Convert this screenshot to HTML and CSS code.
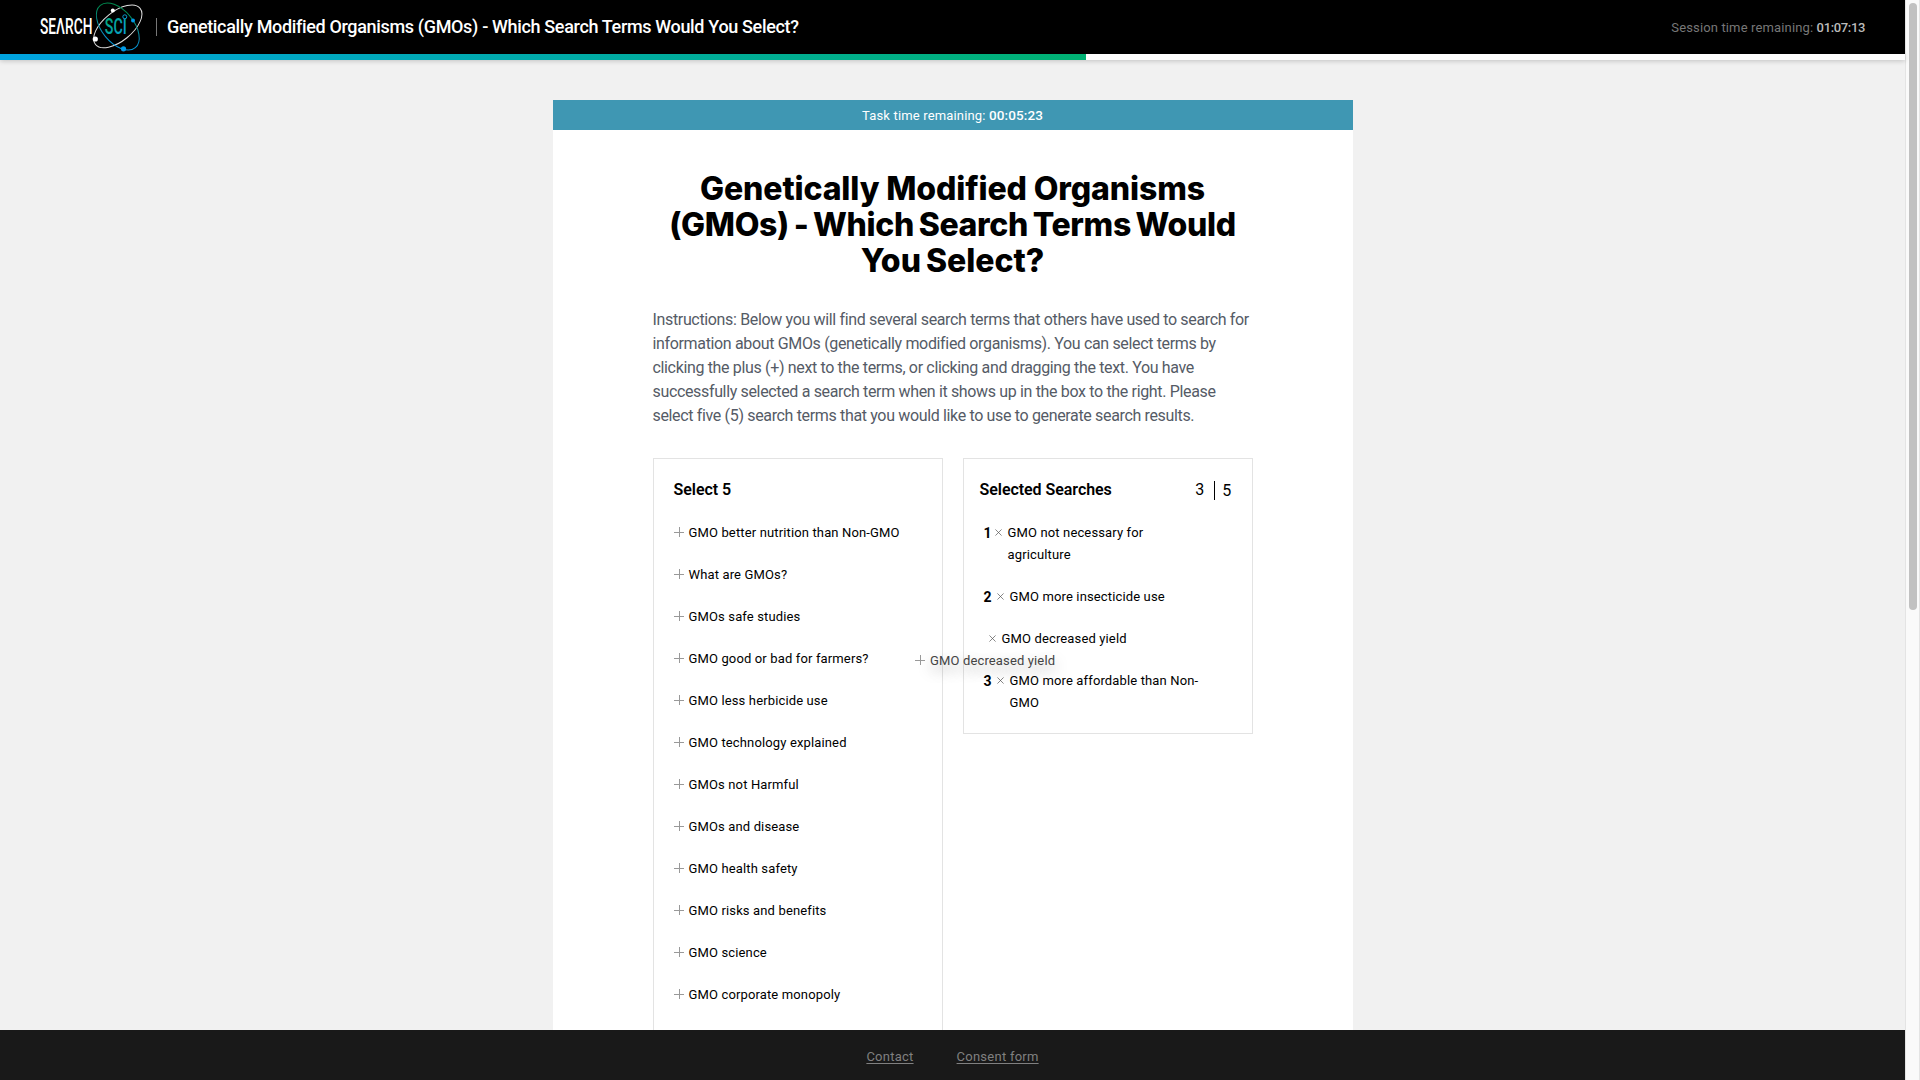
FILE: index.html
```html
<!DOCTYPE html>
<html lang="en">
<head>
<meta charset="utf-8">
<title>Search Sci</title>
<link rel="stylesheet" href="styles.css">
</head>
<body>
<div class="page">
  <header class="header">
    <svg class="logo" width="110" height="54" viewBox="36 0 110 54" role="img" aria-label="Search Sci">
      <defs>
        <linearGradient id="orbit" gradientUnits="userSpaceOnUse" x1="103" y1="8" x2="133" y2="46">
          <stop offset="0.15" stop-color="#00884e"/>
          <stop offset="0.7" stop-color="#0a8fc4"/>
          <stop offset="1" stop-color="#009be8"/>
        </linearGradient>
        <linearGradient id="sci" gradientUnits="userSpaceOnUse" x1="105" y1="18" x2="127" y2="32">
          <stop offset="0" stop-color="#00a878"/>
          <stop offset="1" stop-color="#0a9fd8"/>
        </linearGradient>
      </defs>
      <ellipse cx="117.8" cy="26.4" rx="28.7" ry="14.6" transform="rotate(-39 117.8 26.4)" class="orbit-white"/>
      <ellipse cx="117.8" cy="26.5" rx="27.5" ry="16" transform="rotate(50.5 117.8 26.5)" class="orbit-color"/>
      <circle cx="112.8" cy="10.5" r="2" fill="#fff"/>
      <circle cx="95.3" cy="39" r="2.6" fill="#fff"/>
      <circle cx="133" cy="20.5" r="2" fill="#009be8"/>
      <circle cx="123.5" cy="48.8" r="2.6" fill="#009be8"/>
      <text x="40" y="34" textLength="52.5" lengthAdjust="spacingAndGlyphs" class="logo-text" fill="#fff">SEΛRCH</text>
      <text x="104.8" y="34" textLength="22" lengthAdjust="spacingAndGlyphs" class="logo-text" fill="url(#sci)">SCI</text>
      <circle cx="124.8" cy="16.8" r="2" fill="#000" stroke="#0a9fd0"/>
    </svg>
    <div class="header-title">Genetically Modified Organisms (GMOs) - Which Search Terms Would You Select?</div>
    <div class="session">Session time remaining: <b>01:07:13</b></div>
  </header>
  <div class="progress"><div class="progress-fill" style="width: 57%"></div></div>

  <main class="content">
    <div class="card">
      <div class="task-time">Task time remaining: <b>00:05:23</b></div>
      <div class="card-body">
        <h1><span class="line-a">Genetically Modified Organisms</span><br><span class="line-b">(GMOs) - Which Search Terms Would</span><br><span class="line-c">You Select?</span></h1>
        <p class="intro">Instructions: Below you will find several search terms that others have used to search for<br>information about GMOs (genetically modified organisms). You can select terms by<br>clicking the plus (+) next to the terms, or clicking and dragging the text. You have<br>successfully selected a search term when it shows up in the box to the right. Please<br>select five (5) search terms that you would like to use to generate search results.</p>
        <div class="columns">
          <section class="box pool">
            <h2>Select 5</h2>
            <ul>
              <li><i class="plus"></i>GMO better nutrition than Non-GMO</li>
              <li><i class="plus"></i>What are GMOs?</li>
              <li><i class="plus"></i>GMOs safe studies</li>
              <li><i class="plus"></i>GMO good or bad for farmers?</li>
              <li><i class="plus"></i>GMO less herbicide use</li>
              <li><i class="plus"></i>GMO technology explained</li>
              <li><i class="plus"></i>GMOs not Harmful</li>
              <li><i class="plus"></i>GMOs and disease</li>
              <li><i class="plus"></i>GMO health safety</li>
              <li><i class="plus"></i>GMO risks and benefits</li>
              <li><i class="plus"></i>GMO science</li>
              <li><i class="plus"></i>GMO corporate monopoly</li>
            </ul>
          </section>
          <section class="box selected">
            <div class="box-head">
              <h2>Selected Searches</h2>
              <div class="count"><span>3</span><span class="total">5</span></div>
            </div>
            <ul>
              <li class="first"><b>1</b><svg class="cross" viewBox="0 0 8 8"><path d="M.5.5l7 7M7.5.5l-7 7"/></svg><span>GMO not necessary for<br>agriculture</span></li>
              <li><b>2</b><svg class="cross" viewBox="0 0 8 8"><path d="M.5.5l7 7M7.5.5l-7 7"/></svg><span>GMO more insecticide use</span></li>
              <li class="incoming"><svg class="cross" viewBox="0 0 8 8"><path d="M.5.5l7 7M7.5.5l-7 7"/></svg><span>GMO decreased yield</span></li>
              <li><b>3</b><svg class="cross" viewBox="0 0 8 8"><path d="M.5.5l7 7M7.5.5l-7 7"/></svg><span>GMO more affordable than Non-<br>GMO</span></li>
            </ul>
          </section>
        </div>
      </div>
    </div>
  </main>

  <footer class="footer"><a>Contact</a><a>Consent form</a></footer>
  <div class="dragged"><i class="plus"></i>GMO decreased yield</div>
</div>
<div class="scrollbar"><div class="thumb"></div></div>
</body>
</html>
```
FILE: styles.css
```css
* { box-sizing: border-box; }

body {
  margin: 0;
  height: 1080px;
  display: flex;
  overflow: hidden;
  font: 13px/22px Roboto, "Liberation Sans", sans-serif;
  letter-spacing: 0.14px;
  color: #000;
  background: #f1f1f1;
}

h1, h2, p, ul { margin: 0; padding: 0; }
ul { list-style: none; }

.page {
  width: 1905px;
  height: 1080px;
  display: flex;
  flex-direction: column;
}

.header {
  height: 54px;
  flex: none;
  display: flex;
  align-items: center;
  padding: 0 40px 0 36px;
  background: #000;
  color: #fff;
}
.logo { margin-right: 10px; }
.orbit-white { fill: none; stroke: #ddd; stroke-width: 1; }
.orbit-color { fill: none; stroke: url(#orbit); stroke-width: 1; }
.logo-text { font: 500 21.6px Roboto, sans-serif; letter-spacing: 0; }
.header-title {
  display: flex;
  align-items: center;
  font-size: 18px;
  font-weight: 500;
  letter-spacing: -0.34px;
}
.header-title::before {
  content: "";
  width: 1px;
  height: 18px;
  margin-right: 10px;
  background: #777;
}
.session { margin-left: auto; padding-top: 1px; color: #777; }
.session b { font-weight: 500; letter-spacing: -0.35px; color: #bbb; }

.progress {
  height: 6px;
  flex: none;
  position: relative;
  background: #fff;
  box-shadow: 0 1px 5px rgba(0, 0, 0, 0.2);
}
.progress-fill { height: 6px; background: linear-gradient(90deg, #00a3e0, #00b273); }

.content {
  flex: 1;
  min-height: 0;
  overflow: hidden;
  display: flex;
  justify-content: center;
  padding-top: 40px;
}
.card { width: 800px; height: 1100px; background: #fff; }
.task-time {
  height: 30px;
  line-height: 31px;
  text-align: center;
  letter-spacing: 0.16px;
  color: #fff;
  background: #3f97b3;
}
.task-time b { font-weight: 500; font-size: 13.5px; letter-spacing: 0.1px; }
.card-body { padding: 41px 100px 0; }

h1 {
  font: 800 32px/36px Inter, sans-serif;
  text-align: center;
}
.line-a { letter-spacing: -0.12px; }
.line-b { letter-spacing: -0.34px; word-spacing: -2px; }
.line-c { letter-spacing: -0.02px; word-spacing: -2px; }

.intro {
  margin-top: 29px;
  font-size: 16px;
  line-height: 24px;
  letter-spacing: -0.345px;
  white-space: nowrap;
  color: #555b66;
}

.columns { display: flex; align-items: flex-start; gap: 20px; margin-top: 30px; }
.box { width: 290px; border: 1px solid #e3e3e3; padding: 20px; }
.box h2 { font-size: 16px; line-height: 22px; font-weight: 600; letter-spacing: -0.05px; }
.pool { height: 900px; }
.pool li { display: flex; align-items: center; margin-bottom: 20px; }
.pool ul, .selected ul { margin-top: 21px; }

.plus {
  width: 10px;
  height: 10px;
  margin-right: 5px;
  background:
    linear-gradient(#999, #999) 50% 5px / 100% 1px no-repeat,
    linear-gradient(#999, #999) 5px 50% / 1px 100% no-repeat;
  transform: translateY(-1px);
}

.selected { padding: 20px 20px 19px 15px; }
.box-head { display: flex; justify-content: space-between; height: 22px; }
.box-head h2 { padding-left: 1px; }
.count { display: flex; align-items: center; gap: 10px; font-size: 16px; }
.total { padding-left: 7px; border-left: 1px solid #000; line-height: 19px; height: 19px; }
.selected li { display: flex; padding-left: 5px; margin-bottom: 20px; }
.selected li:last-child { margin-bottom: 0; }
.selected b { width: 9px; font-size: 14px; }
.selected .first b { width: 7px; }
.cross {
  width: 7px;
  height: 7px;
  margin: 7px 6px 0 4px;
  fill: none;
  stroke: #555;
  stroke-width: 0.8;
}
.selected .incoming { padding-left: 6px; }

.footer {
  height: 50px;
  flex: none;
  display: flex;
  justify-content: center;
  align-items: center;
  gap: 43px;
  padding-top: 4px;
  background: #191919;
  color: #808080;
}
.footer a { letter-spacing: 0.25px; text-decoration: underline; text-underline-offset: 2px; }

.dragged {
  position: absolute;
  left: 915px;
  top: 650px;
  display: flex;
  align-items: center;
  color: #444;
  text-shadow: 0 6px 14px rgba(0, 0, 0, 0.35);
}

.scrollbar {
  width: 15px;
  border: solid #e4e4e4;
  border-width: 0 1px;
  padding: 3px 2px 0 3px;
  background: #fafafa;
}
.thumb { width: 8px; height: 607px; border-radius: 4px; background: #c1c1c1; }
```
